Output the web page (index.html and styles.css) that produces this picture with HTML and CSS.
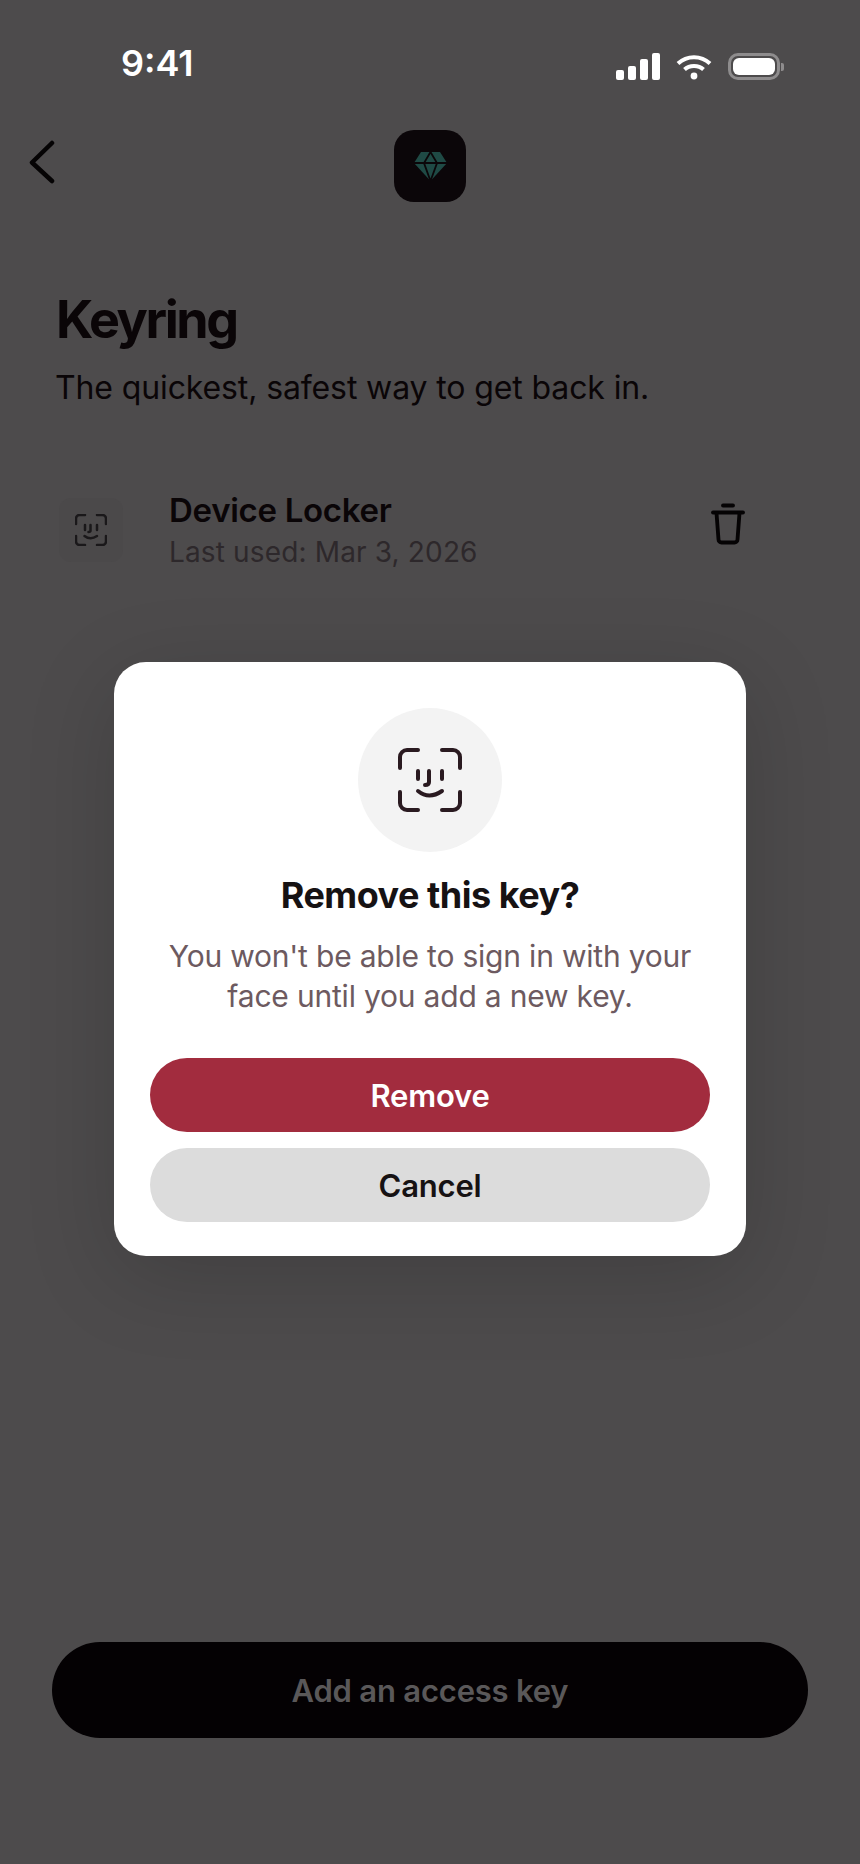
FILE: index.html
```html
<!DOCTYPE html>
<html lang="en">
<head>
  <meta charset="UTF-8">
  <title>Keyring</title>
  <link rel="stylesheet" href="styles.css">
</head>
<body>
  <div class="screen">

    <div class="status-bar">
      <span class="time">9:41</span>
      <div class="status-icons">
        <div class="signal">
          <span class="bar bar1"></span>
          <span class="bar bar2"></span>
          <span class="bar bar3"></span>
          <span class="bar bar4"></span>
        </div>
        <svg class="wifi" width="36" height="26" viewBox="0 0 36 26" fill="none" stroke="#fff" stroke-width="4" stroke-linecap="butt">
          <path d="M2 9.500C11 1 25 1 34 9.500"/>
          <path d="M8.500 15.500C13.500 10.800 22.500 10.800 27.500 15.500"/>
          <circle cx="18" cy="22" r="3.400" fill="#fff" stroke="none"/>
        </svg>
        <div class="battery">
          <div class="battery-body"><div class="battery-fill"></div></div>
          <div class="battery-cap"></div>
        </div>
      </div>
    </div>

    <div class="top-bar">
      <svg class="back" width="26" height="44" viewBox="0 0 26 44" fill="none" stroke="#050304" stroke-width="4.500" stroke-linecap="round" stroke-linejoin="round">
        <path d="M23 3L3 22.500L23 41"/>
      </svg>
      <div class="app-icon">
        <svg width="33" height="29" viewBox="0 0 33 29">
          <path d="M7 0H26L33 11L16.500 29L0 11Z" fill="#1f4a45"/>
          <path d="M0 11H33M16.500 0L10 11L16.500 29L23 11Z" fill="none" stroke="#0b0609" stroke-width="1.800"/>
        </svg>
      </div>
    </div>

    <div class="content">
      <h1>Keyring</h1>
      <p class="subtitle">The quickest, safest way to get back in.</p>

      <div class="key-row">
        <div class="key-icon">
          <svg width="32" height="32" viewBox="0 0 64 64" fill="none" stroke="#1a181a" stroke-width="5" stroke-linecap="round" stroke-linejoin="round">
            <path d="M2 20V9a7 7 0 0 1 7-7H20M44 2H55a7 7 0 0 1 7 7V20M2 44V55a7 7 0 0 0 7 7H20M44 62H55a7 7 0 0 0 7-7V44"/>
            <path d="M20 22V32M44 22V32M31 22V33q0 3-4 3M19 44q12 9 25 0"/>
          </svg>
        </div>
        <div class="key-text">
          <div class="key-name">Device Locker</div>
          <div class="key-used">Last used: Mar 3, 2026</div>
        </div>
        <svg class="trash" width="36" height="42" viewBox="0 0 36 42" fill="none" stroke="#050304" stroke-width="3.800" stroke-linecap="round" stroke-linejoin="round">
          <path d="M13 2.500H23"/>
          <path d="M3 9.500H33"/>
          <path d="M6.500 10L8.500 36.500a3 3 0 0 0 3 3H24.500a3 3 0 0 0 3-3L29.500 10"/>
        </svg>
      </div>
    </div>

    <div class="bottom">
      <button class="add-btn">Add an access key</button>
    </div>

    <div class="overlay">
      <div class="modal">
        <div class="modal-circle">
          <svg width="64" height="64" viewBox="0 0 64 64" fill="none" stroke="#2a1a20" stroke-width="4" stroke-linecap="round" stroke-linejoin="round">
            <path d="M2 20V9a7 7 0 0 1 7-7H20M44 2H55a7 7 0 0 1 7 7V20M2 44V55a7 7 0 0 0 7 7H20M44 62H55a7 7 0 0 0 7-7V44"/>
            <path d="M20 23V31M44 23V31M31 23V34q0 3-4 3M20 43q11 9 24 0"/>
          </svg>
        </div>
        <h2>Remove this key?</h2>
        <p class="modal-text">You won't be able to sign in with your<br>face until you add a new key.</p>
        <div class="modal-buttons">
          <button class="btn btn-remove">Remove</button>
          <button class="btn btn-cancel">Cancel</button>
        </div>
      </div>
    </div>

  </div>
</body>
</html>
```

FILE: styles.css
```css
* {
  box-sizing: border-box;
}

body {
  margin: 0;
  padding: 0;
  background-color: #4d4b4c;
  font-family: Inter, "Liberation Sans", sans-serif;
}

.screen {
  position: relative;
  width: 860px;
  height: 1864px;
  display: flex;
  flex-direction: column;
  background-color: #4d4b4c;
  color: #0a0507;
  overflow: hidden;
}

/* status bar */
.status-bar {
  height: 130px;
  flex-shrink: 0;
  display: flex;
  justify-content: space-between;
  align-items: flex-start;
  padding: 42px 76px 0 121px;
}

.time {
  font-size: 36px;
  line-height: 42px;
  font-weight: 600;
  color: #fff;
}

.status-icons {
  display: flex;
  align-items: flex-end;
  gap: 16px;
  margin-top: 11px;
}

.signal {
  display: flex;
  align-items: flex-end;
  gap: 4px;
  height: 27px;
}

.bar {
  width: 8px;
  background-color: #fff;
  border-radius: 2px;
}

.bar1 { height: 10px; }
.bar2 { height: 14px; }
.bar3 { height: 21px; }
.bar4 { height: 27px; }

.battery {
  display: flex;
  align-items: center;
  gap: 1px;
}

.battery-body {
  width: 52px;
  height: 27px;
  border: 3px solid #8e8c8d;
  border-radius: 10px;
  padding: 2px;
}

.battery-fill {
  height: 100%;
  background-color: #fff;
  border-radius: 6px;
}

.battery-cap {
  width: 3px;
  height: 8px;
  background-color: #8e8c8d;
  border-radius: 0 2px 2px 0;
}

/* top bar */
.top-bar {
  height: 72px;
  flex-shrink: 0;
  display: flex;
  justify-content: center;
  align-items: center;
  position: relative;
}

.back {
  position: absolute;
  left: 29px;
  top: 10px;
}

.app-icon {
  width: 72px;
  height: 72px;
  background-color: #0b0609;
  border-radius: 20px;
  display: flex;
  justify-content: center;
  align-items: center;
}

/* list */
.content {
  padding: 89px 56px 0 56px;
  flex-grow: 1;
}

h1 {
  margin: 0;
  font-size: 52px;
  line-height: 58px;
  font-weight: 700;
  letter-spacing: -2.400px;
  color: #0a0507;
}

.subtitle {
  margin: 20px 0 0 -1px;
  font-size: 32px;
  line-height: 38px;
  letter-spacing: -0.120px;
  color: #0a0507;
}

.key-row {
  display: flex;
  align-items: center;
  margin-top: 84px;
  padding-right: 58px;
}

.key-icon {
  width: 64px;
  height: 64px;
  margin-left: 3px;
  background-color: #4b494a;
  border-radius: 12px;
  display: flex;
  justify-content: center;
  align-items: center;
}

.key-text {
  margin-left: 46px;
  flex-grow: 1;
}

.key-name {
  font-size: 33px;
  line-height: 38px;
  font-weight: 600;
  letter-spacing: -0.300px;
  color: #0a0507;
}

.key-used {
  margin-top: 6px;
  font-size: 28px;
  line-height: 34px;
  letter-spacing: 0.150px;
  color: #2d282b;
}

.trash {
  margin-bottom: 12px;
}

/* bottom button */
.bottom {
  padding: 0 52px 126px 52px;
}

.add-btn {
  width: 100%;
  height: 96px;
  background-color: #040103;
  color: #5a5859;
  border: none;
  border-radius: 48px;
  font-family: inherit;
  font-size: 31px;
  font-weight: 600;
  letter-spacing: -0.200px;
}

/* remove dialog */
.overlay {
  position: absolute;
  top: 0;
  left: 0;
  right: 0;
  bottom: 0;
  display: flex;
  justify-content: center;
  align-items: flex-start;
  padding-top: 662px;
}

.modal {
  width: 632px;
  height: 594px;
  background-color: white;
  border-radius: 32px;
  padding: 46px 36px 34px 36px;
  display: flex;
  flex-direction: column;
  align-items: center;
  box-shadow: 0 20px 90px rgba(0, 0, 0, 0.16);
}

.modal-circle {
  width: 144px;
  height: 144px;
  border-radius: 50%;
  background-color: #f3f3f3;
  display: flex;
  justify-content: center;
  align-items: center;
}

h2 {
  margin: 22px 0 0 0;
  font-size: 36px;
  line-height: 42px;
  font-weight: 700;
  letter-spacing: -0.500px;
  color: #161213;
}

.modal-text {
  margin: 20px 0 0 0;
  font-size: 30px;
  line-height: 40px;
  letter-spacing: -0.200px;
  text-align: center;
  color: #6d5a60;
}

.modal-buttons {
  width: 100%;
  margin-top: auto;
  display: flex;
  flex-direction: column;
  gap: 16px;
}

.btn {
  width: 100%;
  height: 74px;
  padding-top: 2px;
  border: none;
  border-radius: 37px;
  font-family: inherit;
  font-size: 31px;
  font-weight: 600;
  letter-spacing: -0.200px;
}

.btn-remove {
  background-color: #a22c3e;
  color: white;
}

.btn-cancel {
  background-color: #dcdcdc;
  color: #161213;
}
```
